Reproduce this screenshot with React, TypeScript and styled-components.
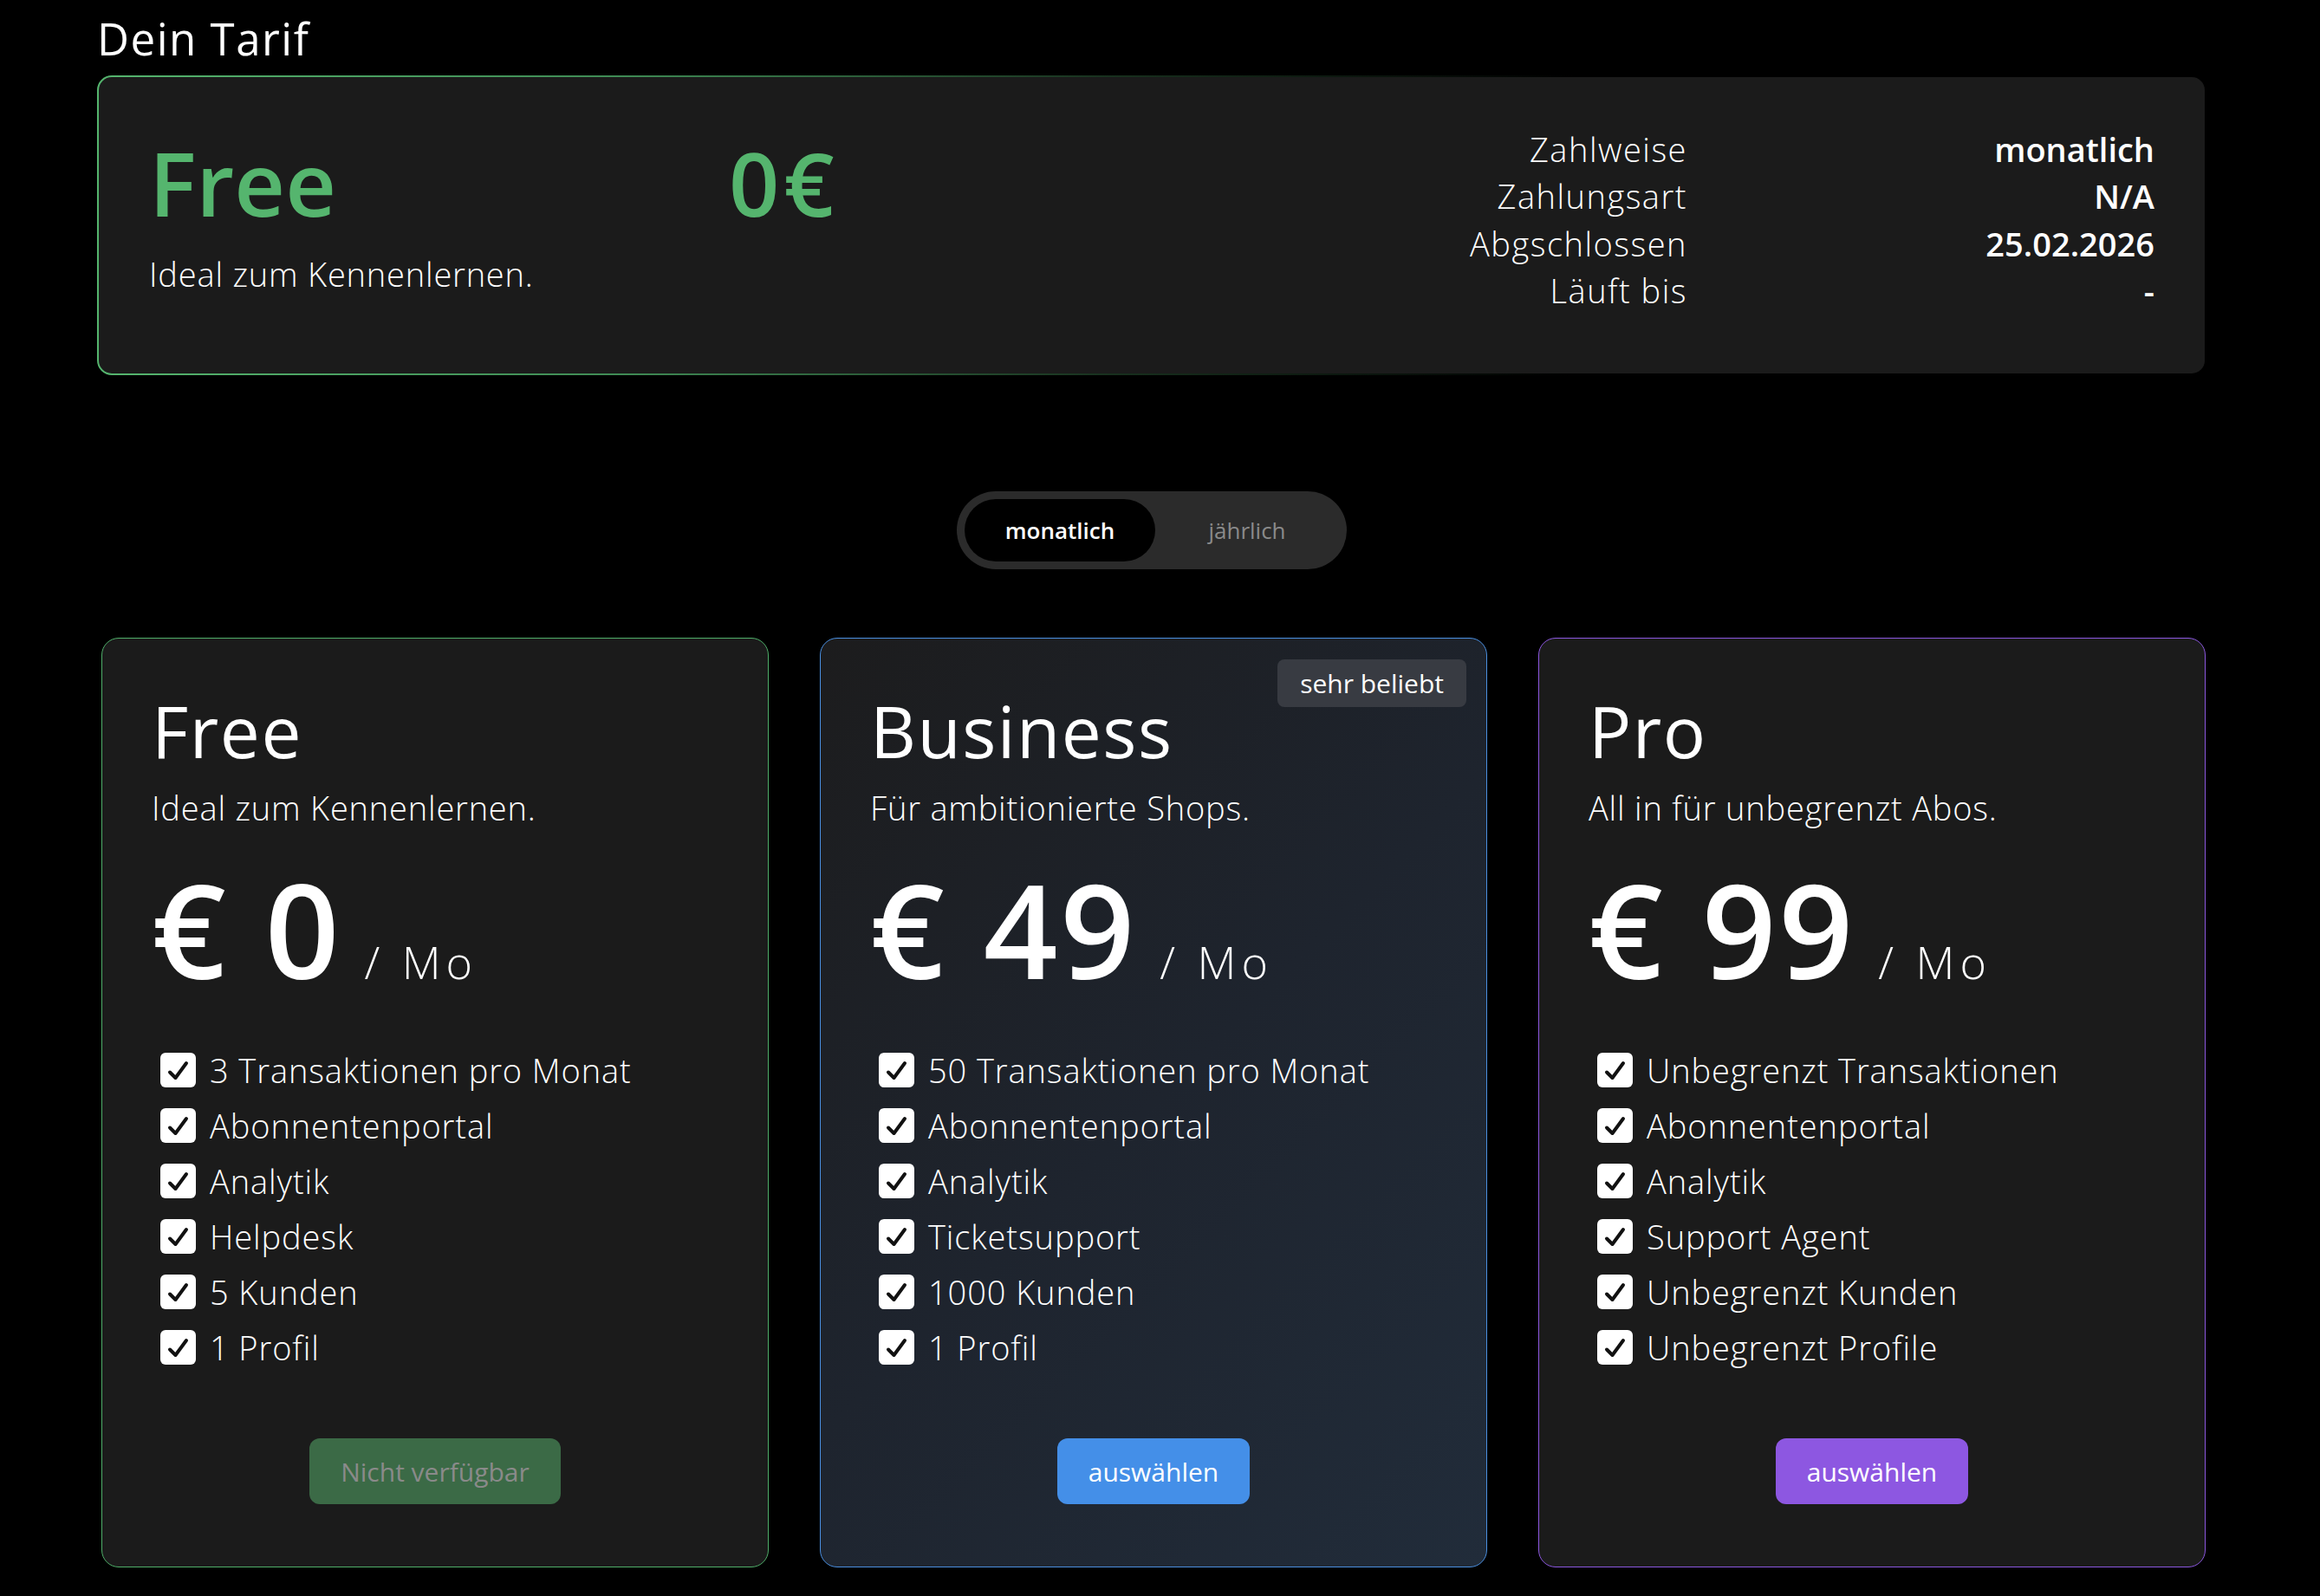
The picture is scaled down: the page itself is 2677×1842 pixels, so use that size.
import React from "react";
import styled, { createGlobalStyle, css } from "styled-components";

const GlobalStyle = createGlobalStyle`
  html, body {
    margin: 0;
    padding: 0;
    background: #000000;
  }
  body {
    font-family: "Open Sans", "Noto Sans", "Liberation Sans", sans-serif;
    color: #ffffff;
  }
  * { box-sizing: border-box; }
`;

type Variant = "free" | "business" | "pro";

const accent: Record<Variant, string> = {
  free: "#4fae69",
  business: "#4a8fe0",
  pro: "#8b57df",
};

const Page = styled.div`
  padding: 14px 0 60px 112px;
  min-height: 1842px;
  background: #000;
`;

const Container = styled.div`
  width: 2434px;
  display: flex;
  flex-direction: column;
`;

const PageTitle = styled.h1`
  margin: 0 0 13px 0;
  font-size: 51px;
  line-height: 60px;
  font-weight: 400;
  letter-spacing: 1.5px;
  color: #ffffff;
`;

const CurrentCard = styled.section`
  height: 346px;
  border-radius: 17px;
  border: 2px solid transparent;
  background:
    linear-gradient(#1b1b1b, #1b1b1b) padding-box,
    linear-gradient(90deg, #55b56e 0%, #3f8a54 25%, rgba(40, 80, 50, 0.6) 48%, rgba(27, 27, 27, 0) 70%) border-box;
  padding: 56px 58px 0 58px;
  display: flex;
  align-items: flex-start;
  justify-content: space-between;
`;

const CurrentMain = styled.div`
  margin-top: 15px;
  display: grid;
  grid-template-columns: 669px auto;
  row-gap: 32px;
`;

const CurrentName = styled.div`
  font-size: 102px;
  line-height: 102px;
  font-weight: 600;
  color: #55b56e;
`;

const CurrentPrice = styled(CurrentName)`
  letter-spacing: 5px;
`;

const CurrentDesc = styled.div`
  grid-column: 1 / span 2;
  font-size: 38px;
  line-height: 45.6px;
  font-weight: 300;
  letter-spacing: 0.8px;
  color: #ffffff;
`;

const DetailsGrid = styled.dl`
  margin: 0;
  display: grid;
  grid-template-columns: auto 539px;
  font-size: 38px;
  line-height: 54.3px;
`;

const DetailLabel = styled.dt`
  margin: 0;
  text-align: right;
  font-weight: 300;
  letter-spacing: 1.5px;
  color: #ffffff;
`;

const DetailValue = styled.dd`
  margin: 0;
  text-align: right;
  font-weight: 600;
  color: #ffffff;
`;

const ToggleWrap = styled.div`
  margin-top: 134px;
  display: flex;
  justify-content: center;
`;

const Toggle = styled.div`
  width: 450px;
  height: 90px;
  padding: 9px;
  border-radius: 45px;
  background: #2b2b2b;
  display: grid;
  grid-template-columns: 220px 1fr;
`;

const ToggleOption = styled.button<{ $active?: boolean }>`
  border: none;
  border-radius: 36px;
  font-family: inherit;
  font-size: 26px;
  cursor: pointer;
  ${({ $active }) =>
    $active
      ? css`
          background: #000000;
          color: #ffffff;
          font-weight: 600;
        `
      : css`
          background: transparent;
          color: #8a8a8a;
          font-weight: 400;
        `}
`;

const Plans = styled.div`
  margin-top: 79px;
  padding-left: 5px;
  display: grid;
  grid-template-columns: repeat(3, 770px);
  column-gap: 59px;
`;

const PlanCard = styled.article<{ $variant: Variant }>`
  position: relative;
  border: 1px solid ${({ $variant }) => accent[$variant]};
  border-radius: 20px;
  padding: 57px 57px 72px 57px;
  display: flex;
  flex-direction: column;
  background: ${({ $variant }) =>
    $variant === "business"
      ? "linear-gradient(135deg, #1c1c1d 0%, #1e242e 50%, #212c3a 100%)"
      : "#1b1b1b"};
`;

const Badge = styled.span`
  position: absolute;
  top: 24px;
  right: 23px;
  height: 55px;
  padding: 0 26px;
  border-radius: 8px;
  background: #383b42;
  color: #ffffff;
  font-size: 30px;
  line-height: 55px;
  font-weight: 400;
`;

const PlanName = styled.h2`
  margin: 0;
  font-size: 82px;
  line-height: 98px;
  font-weight: 400;
  letter-spacing: 1.5px;
  color: #ffffff;
`;

const PlanDesc = styled.p`
  margin: 17px 0 0 0;
  font-size: 38px;
  line-height: 46px;
  font-weight: 300;
  letter-spacing: 0.8px;
  color: #ffffff;
`;

const PriceRow = styled.div`
  margin-top: 42px;
  display: flex;
  align-items: baseline;
  gap: 26px;
`;

const Amount = styled.span`
  font-size: 150px;
  line-height: 150px;
  font-weight: 600;
  letter-spacing: 3px;
  color: #ffffff;
`;

const Per = styled.span`
  font-size: 52px;
  font-weight: 300;
  letter-spacing: 6px;
  color: #ffffff;
`;

const Features = styled.ul`
  list-style: none;
  margin: 65px 0 0 10px;
  padding: 0;
  display: flex;
  flex-direction: column;
  gap: 18px;
`;

const Feature = styled.li`
  display: flex;
  align-items: center;
  gap: 16px;
  height: 46px;
  font-size: 38px;
  line-height: 46px;
  font-weight: 300;
  letter-spacing: 0.9px;
  color: #ffffff;
`;

const CheckBox = styled.span`
  flex: 0 0 auto;
  width: 41px;
  height: 40px;
  border-radius: 6px;
  background: #ffffff;
  display: flex;
  align-items: center;
  justify-content: center;
`;

const ButtonRow = styled.div`
  margin-top: 82px;
  display: flex;
  justify-content: center;
`;

const PlanButton = styled.button<{ $variant: Variant }>`
  height: 76px;
  padding: 0 36px;
  border: none;
  border-radius: 12px;
  font-family: inherit;
  font-size: 30px;
  font-weight: 400;
  cursor: pointer;
  ${({ $variant }) =>
    $variant === "free"
      ? css`
          background: #3b6a46;
          color: #8a8a8a;
          cursor: default;
        `
      : $variant === "business"
      ? css`
          background: #448fe8;
          color: #ffffff;
        `
      : css`
          background: #8d57e1;
          color: #ffffff;
        `}
`;

const Check = () => (
  <svg width="41" height="40" viewBox="0 0 41 40" aria-hidden="true">
    <polyline
      points="11,22.5 17.5,29 30,12"
      fill="none"
      stroke="#111111"
      strokeWidth="4"
      strokeLinecap="round"
      strokeLinejoin="round"
    />
  </svg>
);

type Plan = {
  variant: Variant;
  name: string;
  desc: string;
  price: string;
  features: string[];
  button: string;
  badge?: string;
};

const plans: Plan[] = [
  {
    variant: "free",
    name: "Free",
    desc: "Ideal zum Kennenlernen.",
    price: "€ 0",
    features: [
      "3 Transaktionen pro Monat",
      "Abonnentenportal",
      "Analytik",
      "Helpdesk",
      "5 Kunden",
      "1 Profil",
    ],
    button: "Nicht verfügbar",
  },
  {
    variant: "business",
    name: "Business",
    desc: "Für ambitionierte Shops.",
    price: "€ 49",
    badge: "sehr beliebt",
    features: [
      "50 Transaktionen pro Monat",
      "Abonnentenportal",
      "Analytik",
      "Ticketsupport",
      "1000 Kunden",
      "1 Profil",
    ],
    button: "auswählen",
  },
  {
    variant: "pro",
    name: "Pro",
    desc: "All in für unbegrenzt Abos.",
    price: "€ 99",
    features: [
      "Unbegrenzt Transaktionen",
      "Abonnentenportal",
      "Analytik",
      "Support Agent",
      "Unbegrenzt Kunden",
      "Unbegrenzt Profile",
    ],
    button: "auswählen",
  },
];

const details: [string, string][] = [
  ["Zahlweise", "monatlich"],
  ["Zahlungsart", "N/A"],
  ["Abgschlossen", "25.02.2026"],
  ["Läuft bis", "-"],
];

export default function App() {
  return (
    <>
      <GlobalStyle />
      <Page>
        <Container>
          <PageTitle>Dein Tarif</PageTitle>
          <CurrentCard>
            <CurrentMain>
              <CurrentName>Free</CurrentName>
              <CurrentPrice>0€</CurrentPrice>
              <CurrentDesc>Ideal zum Kennenlernen.</CurrentDesc>
            </CurrentMain>
            <DetailsGrid>
              {details.map(([label, value]) => (
                <React.Fragment key={label}>
                  <DetailLabel>{label}</DetailLabel>
                  <DetailValue>{value}</DetailValue>
                </React.Fragment>
              ))}
            </DetailsGrid>
          </CurrentCard>

          <ToggleWrap>
            <Toggle>
              <ToggleOption $active>monatlich</ToggleOption>
              <ToggleOption>jährlich</ToggleOption>
            </Toggle>
          </ToggleWrap>

          <Plans>
            {plans.map((p) => (
              <PlanCard key={p.name} $variant={p.variant}>
                {p.badge && <Badge>{p.badge}</Badge>}
                <PlanName>{p.name}</PlanName>
                <PlanDesc>{p.desc}</PlanDesc>
                <PriceRow>
                  <Amount>{p.price}</Amount>
                  <Per>/ Mo</Per>
                </PriceRow>
                <Features>
                  {p.features.map((f) => (
                    <Feature key={f}>
                      <CheckBox>
                        <Check />
                      </CheckBox>
                      {f}
                    </Feature>
                  ))}
                </Features>
                <ButtonRow>
                  <PlanButton $variant={p.variant}>{p.button}</PlanButton>
                </ButtonRow>
              </PlanCard>
            ))}
          </Plans>
        </Container>
      </Page>
    </>
  );
}
